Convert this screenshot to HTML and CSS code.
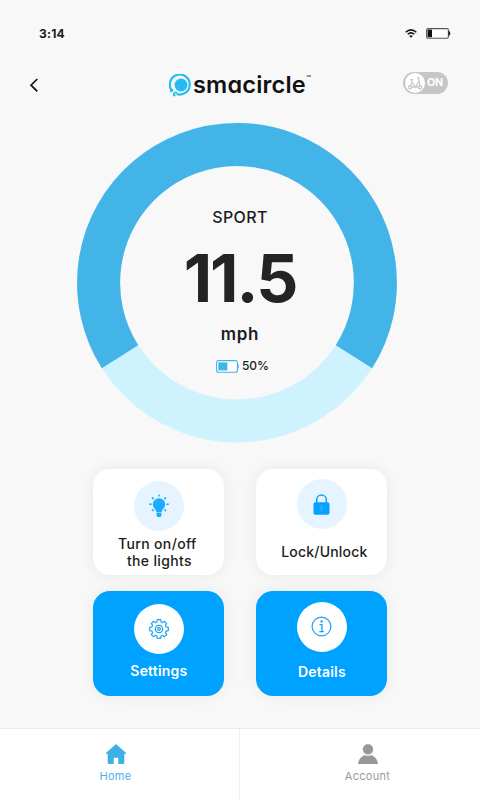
FILE: index.html
```html
<!DOCTYPE html>
<html lang="en">
<head>
    <meta charset="UTF-8">
    <meta name="viewport" content="width=device-width, initial-scale=1.0">
    <title>Smacircle</title>
    <link rel="stylesheet" href="styles.css">
</head>
<body>
    <div class="app">
        <div class="status-bar">
            <span class="time">3:14</span>
            <svg class="wifi" width="12" height="9" viewBox="0 0 12 9">
                <path d="M0.7,3.2 Q6,-1.4 11.3,3.2 M2.7,5.3 Q6,2.5 9.3,5.3" fill="none" stroke="#111" stroke-width="1.5"/>
                <path d="M4.2,6.9 Q6,5.5 7.8,6.9 L6,8.8 Z" fill="#111"/>
            </svg>
            <svg class="battery" width="25" height="11" viewBox="0 0 25 11">
                <rect x="0.6" y="0.6" width="21.8" height="9.6" rx="1.5" fill="#fff" stroke="#555" stroke-width="1.1"/>
                <rect x="1.6" y="1.6" width="4.4" height="7.6" fill="#111"/>
                <path d="M23,3.4 Q25,5.4 23,7.4 Z" fill="#222" stroke="#222"/>
            </svg>
        </div>

        <div class="header">
            <svg class="back" width="10" height="14" viewBox="0 0 10 14">
                <path d="M8.3,1 L2,7.2 L8.3,13.3" fill="none" stroke="#111" stroke-width="1.7"/>
            </svg>
            <div class="brand">
                <svg width="23" height="23" viewBox="0 0 23 23">
                    <circle cx="12" cy="11" r="6.5" fill="#25bdf0"/>
                    <path d="M2.4,16 A10,10 0 1 1 7.6,20" fill="none" stroke="#25bdf0" stroke-width="2.2"/>
                    <path d="M4.3,15.4 L2.4,16.6 M8.5,19 L5.5,18.2 L4.3,20.5" fill="none" stroke="#25bdf0" stroke-width="1.4"/>
                    <circle cx="2.2" cy="16.9" r="1.4" fill="#25bdf0"/>
                    <circle cx="5.2" cy="21" r="1.4" fill="#25bdf0"/>
                </svg>
                <span class="brand-name">smacircle</span>
                <span class="brand-tm">™</span>
            </div>
            <div class="toggle">
                <span class="toggle-knob">
                    <svg width="18" height="18" viewBox="0 0 18 18" fill="none" stroke="#c6c6c8" stroke-width="1.2">
                        <circle cx="4" cy="13.2" r="1.6"/>
                        <circle cx="14" cy="13.2" r="1.6"/>
                        <path d="M4,13 L6.3,8.5 L9,13.2 H5.5 M5,5.3 L6.8,9.5 M4.4,5.5 H7 M14,13 L12.6,3.5 L11,4.6 M12.9,7.5 L9.5,13.2 H12.5"/>
                    </svg>
                </span>
                <span class="toggle-label">ON</span>
            </div>
        </div>

        <div class="gauge">
            <svg class="gauge-ring" width="320" height="321" viewBox="-160 -160.5 320 321">
                <circle r="138.4" fill="none" stroke="#cef2fe" stroke-width="43"/>
                <path d="M-117,74.3 A138.4,138.4 0 1 1 117,74.3" fill="none" stroke="#43b4e8" stroke-width="43"/>
            </svg>
            <div class="readout">
                <div class="mode">SPORT</div>
                <div class="speed">11.5</div>
                <div class="unit">mph</div>
                <div class="charge">
                    <svg width="23" height="13" viewBox="0 0 23 13">
                        <rect x="0.6" y="0.6" width="20.8" height="11.6" rx="2" fill="#fff" stroke="#43b4e8" stroke-width="1.1"/>
                        <rect x="2.3" y="2.4" width="9" height="8" fill="#43b4e8"/>
                        <path d="M22,4.6 V8.2" stroke="#43b4e8" stroke-width="1.4"/>
                    </svg>
                    <span>50%</span>
                </div>
            </div>
        </div>

        <div class="cards">
            <div class="card lights">
                <div class="card-icon">
                    <svg width="20" height="24" viewBox="0 0 20 24">
                        <path d="M10,4.3 A6.2,6.2 0 0 1 16.2,10.5 C16.2,14.2 12.8,14.8 12.6,18.5 H7.4 C7.2,14.8 3.8,14.2 3.8,10.5 A6.2,6.2 0 0 1 10,4.3 Z" fill="#1badff"/>
                        <path d="M7.6,19 H12.4 V21.5 Q12.4,23.3 10,23.3 Q7.6,23.3 7.6,21.5 Z" fill="#1badff"/>
                        <path d="M10,0.5 V2.6 M0.2,10.3 H2.6 M17.4,10.3 H19.8 M3,3.4 L4.7,5.1 M17,3.4 L15.3,5.1 M3,17 L4.6,15.4 M17,17 L15.4,15.4" stroke="#1badff" stroke-width="1.5"/>
                    </svg>
                </div>
                <div class="card-label">Turn on/off<br>&nbsp;the lights</div>
            </div>
            <div class="card lock">
                <div class="card-icon">
                    <svg width="17" height="21" viewBox="0 0 17 21">
                        <path d="M3.7,9 V5.8 A4.8,4.8 0 0 1 13.3,5.8 V9" fill="none" stroke="#05a2ff" stroke-width="1.5"/>
                        <rect x="0.5" y="8.3" width="16" height="12.4" rx="1.8" fill="#05a2ff"/>
                        <circle cx="8.5" cy="13.2" r="1.4" fill="none" stroke="#38aff5" stroke-width="1.1"/>
                        <path d="M8.5,14.6 V17.8" stroke="#38aff5" stroke-width="1.1"/>
                    </svg>
                </div>
                <div class="card-label">Lock/Unlock</div>
            </div>
            <div class="card settings">
                <div class="card-icon">
                    <svg width="20" height="20" viewBox="0 0 20 20" fill="none" stroke="#1aa5f0" stroke-width="1.2" stroke-linejoin="round">
                        <path d="M8.3,0.7 H11.7 L12.1,3 L13.6,3.6 L15.5,2.3 L17.7,4.5 L16.4,6.4 L17,7.9 L19.3,8.3 V11.7 L17,12.1 L16.4,13.6 L17.7,15.5 L15.5,17.7 L13.6,16.4 L12.1,17 L11.7,19.3 H8.3 L7.9,17 L6.4,16.4 L4.5,17.7 L2.3,15.5 L3.6,13.6 L3,12.1 L0.7,11.7 V8.3 L3,7.9 L3.6,6.4 L2.3,4.5 L4.5,2.3 L6.4,3.6 L7.9,3 Z"/>
                        <circle cx="10" cy="10" r="3.7"/>
                        <circle cx="10" cy="10" r="1.4"/>
                    </svg>
                </div>
                <div class="card-label">Settings</div>
            </div>
            <div class="card details">
                <div class="card-icon">
                    <svg width="21" height="21" viewBox="0 0 21 21" fill="none" stroke="#1aa5f0">
                        <circle cx="10.5" cy="10.5" r="9.4" stroke-width="1.2"/>
                        <path d="M8.5,8.7 H11 V15.5 M8.3,15.7 H13" stroke-width="1.3"/>
                        <circle cx="10.6" cy="5.5" r="1.2" fill="#1aa5f0" stroke="none"/>
                    </svg>
                </div>
                <div class="card-label">Details</div>
            </div>
        </div>

        <div class="tab-bar">
            <div class="tab active">
                <svg width="20" height="20" viewBox="0 0 20 20">
                    <path d="M10,0 L20,9 V10 H18.3 V18.5 Q18.3,20 17,20 H12.3 V14.8 Q12.3,13.7 11.2,13.7 H8.8 Q7.7,13.7 7.7,14.8 V20 H3 Q1.7,20 1.7,18.5 V10 H0 V9 Z" fill="#3db1e6"/>
                </svg>
                <span>Home</span>
            </div>
            <div class="tab">
                <svg width="20" height="20" viewBox="0 0 20 20">
                    <circle cx="10" cy="5.2" r="5.2" fill="#999"/>
                    <path d="M0,20 Q0.5,14 6.4,10.9 Q10,12.8 13.6,10.9 Q19.5,14 20,20 Z" fill="#999"/>
                </svg>
                <span>Account</span>
            </div>
        </div>
    </div>
</body>
</html>
```

FILE: styles.css
```css
body {
    margin: 0;
    font-family: Inter, "Liberation Sans", sans-serif;
    color: #1c1c1c;
    background-color: #f8f8f8;
}
svg {
    display: block;
    flex-shrink: 0;
}
.app {
    display: flex;
    flex-direction: column;
    width: 480px;
    height: 800px;
    overflow: hidden;
}
.status-bar {
    display: flex;
    align-items: center;
    height: 20px;
    margin-top: 23px;
    padding: 0 29px 0 39px;
}
.time {
    flex-grow: 1;
    font-size: 12px;
    font-weight: 700;
    letter-spacing: 0.2px;
}
.wifi {
    margin-right: 9px;
}
.header {
    display: flex;
    align-items: center;
    height: 24px;
    margin-top: 29px;
    padding: 0 32px 0 29px;
}
.back {
    margin-top: 2px;
}
.brand {
    display: flex;
    align-items: center;
    margin: 3px auto 0 130px;
}
.brand-name {
    margin: -2px 0 0 1px;
    font-size: 23.5px;
    line-height: 24px;
    font-weight: 600;
    letter-spacing: 0.2px;
    font-feature-settings: "cv11";
    color: #111;
}
.brand-tm {
    align-self: flex-start;
    font-size: 8px;
    line-height: 8px;
}
.toggle {
    display: flex;
    align-items: center;
    gap: 2px;
    width: 43px;
    height: 22px;
    margin-top: -3px;
    padding-left: 2px;
    border-radius: 11px;
    background-color: #c6c6c8;
}
.toggle-knob {
    padding: 1px;
    border-radius: 50%;
    background-color: #fff;
}
.toggle-label {
    font-size: 10.5px;
    font-weight: 700;
    color: #fff;
}
.gauge {
    display: grid;
    width: 320px;
    height: 321px;
    margin: 26px 0 0 77px;
}
.gauge-ring,
.readout {
    grid-area: 1 / 1;
}
.readout {
    display: flex;
    flex-direction: column;
    align-items: center;
    padding: 85px 0 0 6px;
}
.mode {
    font-size: 16px;
    line-height: 20px;
    font-weight: 500;
    letter-spacing: 0.4px;
}
.speed {
    margin-top: 19px;
    font-size: 66px;
    line-height: 64px;
    font-weight: 700;
    letter-spacing: -2px;
    color: #242424;
}
.unit {
    margin-top: 13px;
    font-size: 17px;
    line-height: 22px;
    font-weight: 600;
    letter-spacing: 0.7px;
}
.charge {
    display: flex;
    align-items: center;
    gap: 3px;
    margin: 13px 0 0 5px;
    font-size: 12px;
    line-height: 16px;
    font-weight: 500;
}
.cards {
    display: grid;
    grid-template-columns: 131px 131px;
    grid-template-rows: 105.5px 105.5px;
    gap: 16px 32px;
    margin: 26px 0 0 93.4px;
}
.card {
    display: flex;
    flex-direction: column;
    align-items: center;
    box-sizing: border-box;
    padding-top: 12px;
    border-radius: 17px;
    background-color: #fff;
    box-shadow: 0 0 16px rgba(0, 0, 0, 0.07);
}
.card-icon {
    display: flex;
    align-items: center;
    justify-content: center;
    width: 50px;
    height: 50px;
    border-radius: 50%;
    background-color: #e6f4ff;
}
.card-label {
    margin-top: 4px;
    font-size: 14px;
    line-height: 17px;
    font-weight: 500;
    letter-spacing: 0.2px;
    text-align: center;
    white-space: nowrap;
}
.lights .card-label {
    padding-right: 3px;
    letter-spacing: 0.35px;
}
.lock {
    padding-top: 10px;
}
.lock .card-label {
    margin: 14px 0 0 5px;
}
.settings,
.details {
    padding-top: 13px;
    background-color: #00a2ff;
    color: #fff;
}
.settings .card-icon,
.details .card-icon {
    background-color: #fff;
}
.settings .card-label,
.details .card-label {
    margin-top: 8px;
    font-weight: 600;
}
.details {
    padding-top: 11px;
}
.details .card-label {
    margin-top: 11px;
}
.tab-bar {
    display: grid;
    grid-template-columns: 240px 1fr;
    height: 71px;
    margin-top: auto;
    border-top: 1px solid #ececec;
    background-color: #fff;
}
.tab {
    display: flex;
    flex-direction: column;
    align-items: center;
    gap: 4px;
    padding: 15px 0 0 15px;
    font-size: 11px;
    line-height: 16px;
    letter-spacing: 0.3px;
    color: #999;
}
.tab.active {
    padding: 15px 8px 0 0;
    border-right: 1px solid #eee;
    color: #43b4e8;
}
```
